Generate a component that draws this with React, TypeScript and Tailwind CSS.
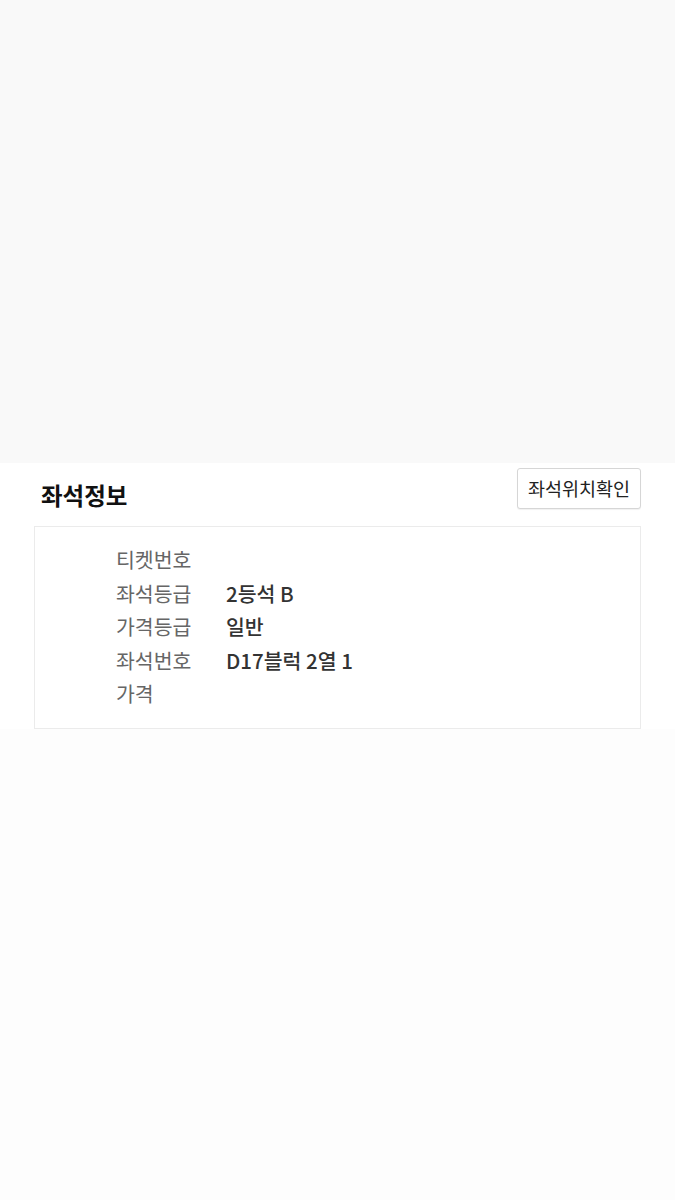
const rows: { label: string; value: string }[] = [
  { label: "티켓번호", value: "" },
  { label: "좌석등급", value: "2등석 B" },
  { label: "가격등급", value: "일반" },
  { label: "좌석번호", value: "D17블럭 2열 1" },
  { label: "가격", value: "" },
];

export default function App() {
  return (
    <div
      className="w-[675px] h-[1200px] flex flex-col bg-[#fdfdfd]"
      style={{ fontFamily: '"Noto Sans CJK KR", "Noto Sans", sans-serif' }}
    >
      {/* Top blank area */}
      <div className="h-[463px] bg-[#f9f9f9]" />

      {/* Seat info */}
      <section className="px-[34px] bg-white">
        <div className="flex items-start justify-between h-[63px]">
          <h2 className="pl-[7px] pt-[21px] text-[23.5px] font-bold text-[#111] leading-none">
            좌석정보
          </h2>
          <button className="mt-[5px] h-[41px] px-[10px] border border-[#d6d6d6] rounded-[3px] bg-white text-[18.5px] text-[#222] shadow-[0_1px_1px_rgba(0,0,0,0.06)]">
            좌석위치확인
          </button>
        </div>

        <div className="border border-[#ebebeb] pt-[16px] pb-[17px] pl-[81px]">
          {rows.map((r) => (
            <div key={r.label} className="flex items-center h-[33.5px] text-[20.5px]">
              <span className="w-[110px] text-[#666]">{r.label}</span>
              <span className="text-[#333] font-medium">{r.value}</span>
            </div>
          ))}
        </div>
      </section>

      <div className="flex-1 bg-[#fdfdfd]" />
    </div>
  );
}
